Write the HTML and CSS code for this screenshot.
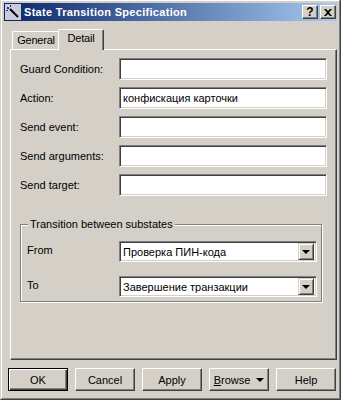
FILE: index.html
```html
<!DOCTYPE html>
<html lang="en">
<head>
    <meta charset="UTF-8">
    <title>State Transition Specification</title>
    <link rel="stylesheet" href="styles.css">
</head>
<body>
    <div class="window">
        <div class="frame">
            <div class="titlebar">
                <svg class="app-icon" width="16" height="16" viewBox="0 0 16 16">
                    <rect x="0" y="0" width="16" height="16" fill="#c8ccd8"/>
                    <line x1="5" y1="5" x2="13" y2="13" stroke="#000" stroke-width="2"/>
                    <rect x="2" y="3" width="2" height="2" fill="#1030a0"/>
                    <rect x="5" y="1" width="1" height="2" fill="#1030a0"/>
                    <rect x="1" y="6" width="2" height="1" fill="#1030a0"/>
                    <rect x="3" y="2" width="1" height="1" fill="#fff"/>
                </svg>
                <span class="title">State Transition Specification</span>
                <div class="caption-buttons">
                    <span class="cap-btn help-btn">?</span>
                    <span class="cap-btn close-btn">
                        <svg width="8" height="7" viewBox="0 0 8 7">
                            <path d="M0 0 L2 0 L4 2 L6 0 L8 0 L5 3.5 L8 7 L6 7 L4 5 L2 7 L0 7 L3 3.5 Z" fill="#000"/>
                        </svg>
                    </span>
                </div>
            </div>

            <div class="client">
                <div class="tabs">
                    <div class="tab">General</div>
                    <div class="tab active">Detail</div>
                </div>

                <div class="panel">
                    <div class="field-row">
                        <label class="field-label">Guard Condition:</label>
                        <div class="edit"></div>
                    </div>
                    <div class="field-row">
                        <label class="field-label">Action:</label>
                        <div class="edit">конфискация карточки</div>
                    </div>
                    <div class="field-row">
                        <label class="field-label">Send event:</label>
                        <div class="edit"></div>
                    </div>
                    <div class="field-row">
                        <label class="field-label">Send arguments:</label>
                        <div class="edit"></div>
                    </div>
                    <div class="field-row">
                        <label class="field-label">Send target:</label>
                        <div class="edit"></div>
                    </div>

                    <div class="group">
                        <div class="group-title"><span>Transition between substates</span></div>
                        <div class="combo-row">
                            <label class="combo-label">From</label>
                            <div class="combo">
                                <span class="combo-text">Проверка ПИН-кода</span>
                                <span class="drop-btn"><span class="arrow"></span></span>
                            </div>
                        </div>
                        <div class="combo-row">
                            <label class="combo-label">To</label>
                            <div class="combo">
                                <span class="combo-text">Завершение транзакции</span>
                                <span class="drop-btn"><span class="arrow"></span></span>
                            </div>
                        </div>
                    </div>
                </div>

                <div class="buttons">
                    <button class="btn default">OK</button>
                    <button class="btn">Cancel</button>
                    <button class="btn">Apply</button>
                    <button class="btn"><u>B</u>rowse <span class="arrow small"></span></button>
                    <button class="btn">Help</button>
                </div>
            </div>
        </div>
    </div>
</body>
</html>
```

FILE: styles.css
```css
:root {
    --face: #d4d0c8;
    --shadow: #808080;
    --dark: #404040;
    --light: #ffffff;
}

* {
    margin: 0;
    padding: 0;
    box-sizing: border-box;
}

body {
    background: var(--face);
    font-family: 'Liberation Sans', Arial, sans-serif;
    font-size: 11px;
    color: #000;
    overflow: hidden;
}

.window {
    width: 341px;
    height: 401px;
    margin-top: -1px;
    border: 1px solid;
    border-color: var(--face) var(--dark) var(--dark) var(--face);
}

.frame {
    height: 100%;
    border: 1px solid;
    border-color: var(--light) var(--shadow) var(--shadow) var(--light);
    padding: 2px;
}

/* title bar */
.titlebar {
    height: 18px;
    display: flex;
    align-items: center;
    background: linear-gradient(to right, #0a246a, #a6caf0);
    padding-left: 1px;
}

.app-icon {
    flex: none;
}

.title {
    margin-left: 3px;
    color: #fff;
    font-weight: bold;
    font-size: 11px;
    letter-spacing: 0.3px;
    flex: 1;
}

.caption-buttons {
    display: flex;
    gap: 2px;
    margin-right: 1px;
}

.cap-btn {
    width: 16px;
    height: 14px;
    background: var(--face);
    border: 1px solid;
    border-color: var(--light) var(--dark) var(--dark) var(--light);
    box-shadow: inset -1px -1px var(--shadow);
    display: flex;
    align-items: center;
    justify-content: center;
    font-weight: bold;
    font-size: 12px;
    line-height: 12px;
}

/* client */
.client {
    padding-top: 8px;
}

.tabs {
    display: flex;
    padding-left: 8px;
    margin-bottom: -1px;
    height: 21px;
}

.tab {
    width: 48px;
    height: 18px;
    margin-top: 2px;
    border: 1px solid;
    border-bottom: none;
    border-color: var(--light) var(--dark) transparent var(--light);
    border-radius: 2px 2px 0 0;
    box-shadow: inset -1px 0 var(--shadow);
    line-height: 17px;
    text-align: center;
    letter-spacing: -0.2px;
}

.tab.active {
    position: relative;
    z-index: 1;
    width: 46px;
    height: 21px;
    margin-top: 0;
    margin-left: -2px;
    background: var(--face);
    line-height: 16px;
}

.panel {
    display: flex;
    flex-direction: column;
    margin-left: 6px;
    height: 311px;
    border: 1px solid;
    border-color: var(--light) var(--dark) var(--dark) var(--light);
    box-shadow: inset -1px -1px var(--shadow);
    padding: 8px 9px 0 9px;
}

.field-row {
    display: flex;
    align-items: center;
    height: 22px;
    flex: none;
    margin-bottom: 7px;
}

.field-label {
    width: 99px;
    padding-bottom: 1px;
}

.edit {
    width: 208px;
    height: 22px;
    background: #fff;
    border: 1px solid;
    border-color: var(--shadow) var(--light) var(--light) var(--shadow);
    box-shadow: inset 1px 1px var(--dark), inset -1px -1px var(--face);
    padding: 0 3px;
    line-height: 20px;
    white-space: nowrap;
}

/* group box */
.group {
    flex: none;
    margin-top: 21px;
    margin-right: 5px;
    height: 78px;
    border: 1px solid var(--shadow);
    box-shadow: inset 1px 1px var(--light), 1px 1px var(--light);
    padding: 0 4px 0 6px;
}

.group-title {
    height: 10px;
    margin-top: -7px;
    line-height: 13px;
}

.group-title span {
    margin-left: 1px;
    padding: 0 2px;
    background: var(--face);
}

.combo-row {
    display: flex;
    align-items: center;
    height: 21px;
    margin-top: 14px;
}

.combo-row:nth-child(2) {
    margin-top: 13px;
}

.combo-label {
    width: 92px;
    padding-bottom: 4px;
}

.combo {
    width: 198px;
    height: 21px;
    background: #fff;
    border: 1px solid;
    border-color: var(--shadow) var(--light) var(--light) var(--shadow);
    box-shadow: inset 1px 1px var(--dark), inset -1px -1px var(--face);
    display: flex;
    align-items: center;
    padding: 2px 2px 2px 3px;
}

.combo-text {
    flex: 1;
    white-space: nowrap;
}

.drop-btn {
    width: 16px;
    height: 17px;
    background: var(--face);
    border: 1px solid;
    border-color: var(--face) var(--dark) var(--dark) var(--face);
    box-shadow: inset 1px 1px var(--light), inset -1px -1px var(--shadow);
    display: flex;
    align-items: center;
    justify-content: center;
}

.arrow {
    width: 0;
    height: 0;
    border-left: 4px solid transparent;
    border-right: 4px solid transparent;
    border-top: 4px solid #000;
}

.arrow.small {
    display: inline-block;
    margin-left: 3px;
    vertical-align: 2px;
}

/* bottom buttons */
.buttons {
    display: flex;
    gap: 7px;
    padding: 8px 0 0 4px;
}

.btn {
    width: 60px;
    height: 23px;
    font-family: inherit;
    font-size: 11px;
    color: #000;
    background: var(--face);
    border: 1px solid;
    border-color: var(--light) var(--dark) var(--dark) var(--light);
    box-shadow: inset -1px -1px var(--shadow);
}

.btn.default {
    border: 1px solid #000;
    box-shadow: inset 1px 1px var(--light), inset -1px -1px var(--dark), inset -2px -2px var(--shadow);
}
```
